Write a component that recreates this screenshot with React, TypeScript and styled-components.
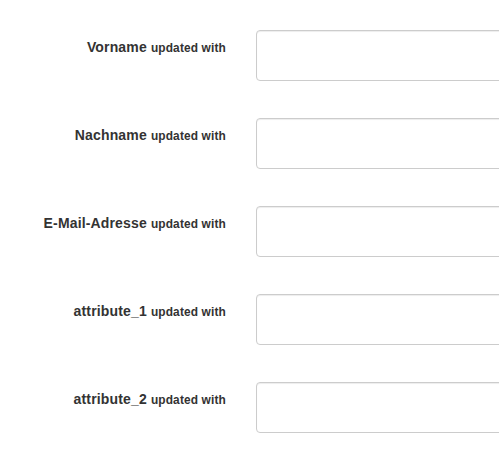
import React from "react";
import styled, { createGlobalStyle } from "styled-components";

const GlobalStyle = createGlobalStyle`
  html, body {
    margin: 0;
    padding: 0;
    background: #fff;
    overflow: hidden;
  }
  body {
    font-family: "Liberation Sans", Arial, Helvetica, sans-serif;
    font-size: 14px;
    line-height: 20px;
    color: #333;
  }
`;

const Form = styled.form`
  display: flex;
  flex-direction: column;
  gap: 37px;
  padding-top: 30px;
`;

const Row = styled.div`
  display: flex;
  align-items: flex-start;
`;

const Label = styled.label`
  flex: 0 0 241px;
  box-sizing: border-box;
  padding: 7px 15px 0 0;
  text-align: right;
  font-weight: 700;
  font-size: 14px;
  line-height: 20px;
  letter-spacing: 0.15px;
  color: #333;
`;

const Small = styled.small`
  font-size: 85%;
  font-weight: 700;
`;

const Field = styled.div`
  flex: 1 1 auto;
  min-width: 0;
  overflow: hidden;
  padding-left: 15px;
`;

const Input = styled.textarea`
  display: block;
  box-sizing: border-box;
  width: 320px;
  height: 51px;
  padding: 6px 12px;
  border: 1px solid #ccc;
  border-radius: 4px;
  background: #fff;
  box-shadow: inset 0 1px 1px rgba(0, 0, 0, 0.075);
  font-family: inherit;
  font-size: 14px;
  resize: none;
  outline: none;
`;

const fields = ["Vorname", "Nachname", "E-Mail-Adresse", "attribute_1", "attribute_2"];

export default function App() {
  return (
    <>
      <GlobalStyle />
      <Form>
        {fields.map((name) => (
          <Row key={name}>
            <Label>
              {name} <Small>updated with</Small>
            </Label>
            <Field>
              <Input />
            </Field>
          </Row>
        ))}
      </Form>
    </>
  );
}
